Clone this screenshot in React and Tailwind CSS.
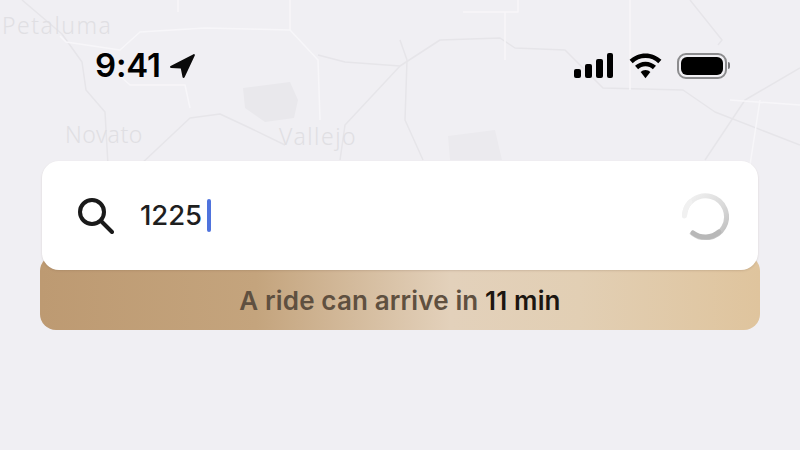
function MapBackground() {
  return (
    <svg className="absolute inset-0 blur-[0.7px]" width="800" height="165" viewBox="0 0 800 165" fill="none">
      <path d="M243 88L290 82L298 100L294 118L265 122L245 108Z" fill="#e9e8ec" />
      <path d="M448 136L495 130L502 160L450 160Z" fill="#ebeaee" />
      <g stroke="#e6e5e9" strokeWidth="1.5" strokeLinejoin="round">
        <path d="M22 0L62 34L82 62L86 90L105 112L108 165" />
        <path d="M140 165L190 118L220 114L250 128L285 145" />
        <path d="M318 55L345 62L400 66L440 40L500 38L515 48L565 50L603 88L683 90L715 112L800 145" />
        <path d="M400 66L345 125L340 160" />
        <path d="M400 40L407 60L405 120L423 160" />
        <path d="M800 68L745 100L705 160" />
        <path d="M690 0L722 40L718 45" />
      </g>
      <g stroke="#f7f6f9" strokeWidth="1.5" strokeLinejoin="round">
        <path d="M60 36L66 42L120 50L140 32L205 28L290 30L318 60L320 120" />
        <path d="M120 76L130 85L185 85L190 108" />
        <path d="M178 0L178 12M290 0L290 30M463 12L518 12L518 0M505 12L505 60M630 0L630 90" />
        <path d="M730 100L800 105M760 100L750 165" />
      </g>
    </svg>
  );
}

function StatusBar() {
  return (
    <div className="relative flex items-center justify-between h-[131px] pl-[95px] pr-[70px]">
      <div className="flex items-center gap-[8px]">
        <span className="text-[33px] leading-none font-semibold text-black font-['Inter',sans-serif] tracking-[-0.2px]">9:41</span>
        <svg width="27" height="26" viewBox="0 0 27 26" fill="#0a0a0a">
          <path d="M24.5 1.2c.9-.4 1.7.5 1.3 1.4L15.6 24.2c-.5 1-1.9.9-2.1-.2l-1.700-8.600-9.700-.5C.9 14.800.6 13.500 1.600 13Z" />
        </svg>
      </div>
      <div className="flex items-center">
        <div className="flex items-end gap-[4px] h-[25px]">
          <div className="w-[7px] h-[9px] rounded-[2px] bg-black" />
          <div className="w-[7px] h-[14px] rounded-[2px] bg-black" />
          <div className="w-[7px] h-[19px] rounded-[2px] bg-black" />
          <div className="w-[6px] h-[25px] rounded-[2px] bg-black" />
        </div>
        <svg className="ml-[16px]" width="33" height="26" viewBox="0 0 34 26" fill="#000">
          <path d="M17 0C10.500 0 5 2.500.6 6.600l3.200 3.500C7.200 6.800 11.800 4.800 17 4.800s9.800 2 13.200 5.300l3.200-3.500C29 2.500 23.500 0 17 0Z" />
          <path d="M17 8.500c-4.300 0-8 1.700-10.800 4.300l3.200 3.500c2-1.900 4.600-3 7.600-3s5.600 1.100 7.600 3l3.200-3.500C25 10.200 21.300 8.500 17 8.500Z" />
          <path d="M17 17.200c-2 0-3.700.8-5 2l5 6.300 5-6.300c-1.300-1.200-3-2-5-2Z" />
        </svg>
        <div className="flex items-center gap-[1px] ml-[15px]">
          <div className="w-[50px] h-[26px] rounded-[9px] border-2 border-[#8c8c8e] p-[2px]">
            <div className="w-full h-full rounded-[6px] bg-black" />
          </div>
          <div className="w-[2px] h-[7px] rounded-r-full bg-[#77777a]" />
        </div>
      </div>
    </div>
  );
}

function SearchCard() {
  return (
    <div className="relative mx-[40px] mt-[30px] h-[169px]">
      <div className="absolute inset-x-0 bottom-0 h-[75px] rounded-[16px] bg-[linear-gradient(90deg,#bd9a72_0%,#c4a47d_30%,#e3d1bb_57%,#e2cfb4_75%,#dfc49d_100%)] flex items-end justify-center pb-[14px]">
        <p className="text-[26px] leading-[30px] font-semibold text-[#5f5040] font-['Inter',sans-serif] tracking-[0.15px]">
          A ride can arrive in <span className="text-[#1c1610]">11 min</span>
        </p>
      </div>
      <div className="relative mx-[2px] h-[109px] rounded-[17px] bg-white shadow-[0_1px_2px_rgba(120,90,70,0.2)] flex items-center pl-[34px] pr-[29px]">
        <svg width="38" height="38" viewBox="0 0 38 38" fill="none" stroke="#1a1a1a" strokeWidth="4" strokeLinecap="round">
          <circle cx="16" cy="15" r="12" />
          <path d="M25 24L36 35" />
        </svg>
        <span className="ml-[26px] text-[27.5px] leading-none font-[550] text-[#1f1f1f] font-['Inter',sans-serif] tracking-[-0.1px]">1225</span>
        <div className="ml-[5px] w-[4px] h-[33px] rounded-full bg-[#4f73dd]" />
        <svg className="ml-auto" width="48" height="48" viewBox="0 0 48 48" fill="none" strokeWidth="5" strokeLinecap="round">
          <defs>
            <linearGradient id="spinA" x1="0" y1="0" x2="1" y2="1">
              <stop offset="0%" stopColor="#f4f4f4" />
              <stop offset="60%" stopColor="#d8d8d8" />
              <stop offset="100%" stopColor="#bcbcbc" />
            </linearGradient>
          </defs>
          <path d="M10 40A21 21 0 1 0 3.500 24" stroke="url(#spinA)" strokeLinecap="butt" />
          <path d="M38 40A21 21 0 0 1 12 41" stroke="#b8b8b8" />
          <path d="M3.500 24A21 21 0 0 1 9 10" stroke="#f1f1f1" />
        </svg>
      </div>
    </div>
  );
}

export default function App() {
  return (
    <div className="relative w-[800px] h-[450px] overflow-hidden bg-[#f0eff3] font-['Inter',sans-serif]">
      <MapBackground />
      <span className="absolute left-[2px] top-[11px] text-[23px] leading-[28px] text-[#e0dfe3] font-['Noto_Sans',sans-serif] font-light tracking-[1.5px]">Petaluma</span>
      <span className="absolute left-[65px] top-[120px] text-[23px] leading-[28px] text-[#e0dfe3] font-['Noto_Sans',sans-serif] font-light tracking-[0.6px]">Novato</span>
      <span className="absolute left-[279px] top-[122px] text-[23px] leading-[28px] text-[#e0dfe3] font-['Noto_Sans',sans-serif] font-light tracking-[1.5px]">Vallejo</span>
      <StatusBar />
      <SearchCard />
    </div>
  );
}
